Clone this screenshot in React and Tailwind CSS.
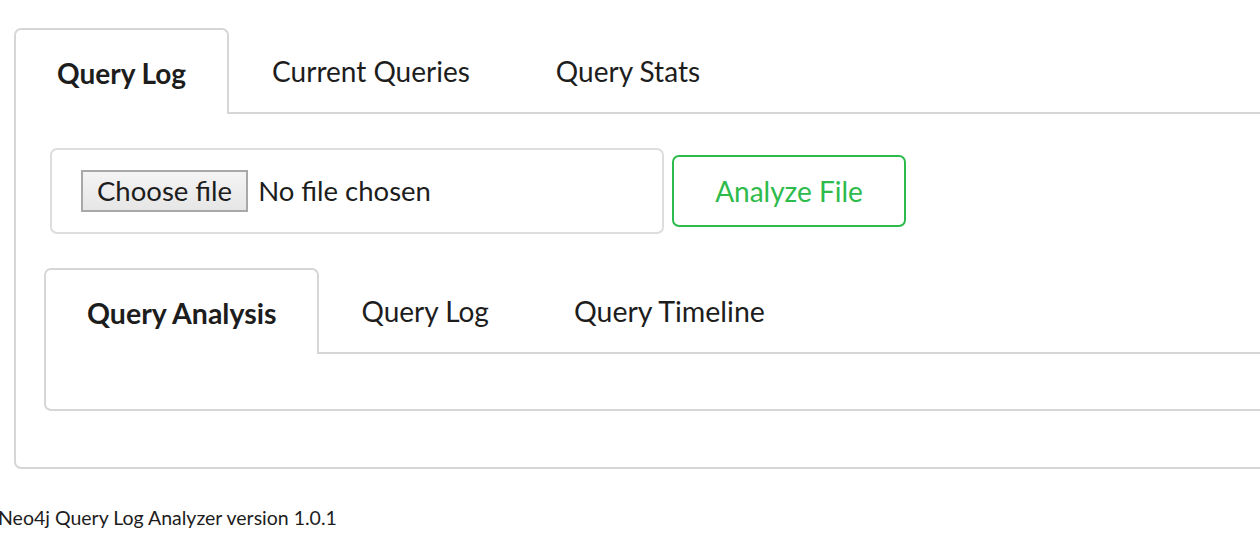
export default function App() {
  const border = "border-[#d6d6d6]";
  return (
    <div
      className="relative w-[1260px] h-[556px] overflow-hidden bg-white text-[#1d1d1d]"
      style={{ fontFamily: "Lato, 'Open Sans', sans-serif" }}
    >
      <div className="ml-[14px] pt-[28px] w-[1420px]">
        {/* outer tabs */}
        <div className="flex">
          <div className={`h-[86px] flex items-center pt-[2px] px-[41px] border-t-2 border-l-2 border-r-2 ${border} rounded-t-[7px] text-[28px] font-bold`}>
            Query Log
          </div>
          <div className={`h-[86px] flex items-center pt-[2px] px-[43px] border-b-2 ${border} text-[28px]`}>
            Current Queries
          </div>
          <div className={`h-[86px] flex items-center pt-[2px] px-[43px] border-b-2 ${border} text-[28px]`}>
            Query Stats
          </div>
          <div className={`flex-1 border-b-2 ${border}`} />
        </div>
        {/* outer body */}
        <div className={`border-l-2 border-r-2 border-b-2 ${border} rounded-b-[7px] pt-[34px] pb-[56px]`}>
          <div className="flex items-center ml-[34px]">
            <div className="w-[614px] h-[86px] border-2 border-[#dddddd] rounded-[7px] flex items-center pl-[29px]">
              <div className="h-[42px] px-[14px] flex items-center border-2 border-[#a8a8a8] bg-gradient-to-b from-[#f4f4f4] to-[#e6e6e6] text-[27.5px]">
                Choose file
              </div>
              <div className="ml-[10px] text-[27.5px]">No file chosen</div>
            </div>
            <div className="ml-[8px] w-[234px] h-[72px] border-2 border-[#2dbb4c] rounded-[7px] flex items-center justify-center text-[#2dbb4c] text-[28px]">
              Analyze File
            </div>
          </div>
          {/* inner panel */}
          <div className="ml-[28px] mt-[34px]">
            <div className="flex">
              <div className={`h-[86px] flex items-center pt-[2px] px-[41px] border-t-2 border-l-2 border-r-2 ${border} rounded-t-[7px] text-[28.5px] font-bold`}>
                Query Analysis
              </div>
              <div className={`h-[86px] flex items-center pt-[2px] px-[42px] border-b-2 ${border} text-[28px]`}>
                Query Log
              </div>
              <div className={`h-[86px] flex items-center pt-[2px] px-[43px] border-b-2 ${border} text-[28.5px]`}>
                Query Timeline
              </div>
              <div className={`flex-1 border-b-2 ${border}`} />
            </div>
            <div className={`h-[57px] border-l-2 border-r-2 border-b-2 ${border} rounded-b-[7px]`} />
          </div>
        </div>
      </div>
      <div className="ml-[-2px] mt-[36px] text-[19.5px] leading-[26px] whitespace-nowrap">
        Neo4j Query Log Analyzer version 1.0.1
      </div>
    </div>
  );
}
